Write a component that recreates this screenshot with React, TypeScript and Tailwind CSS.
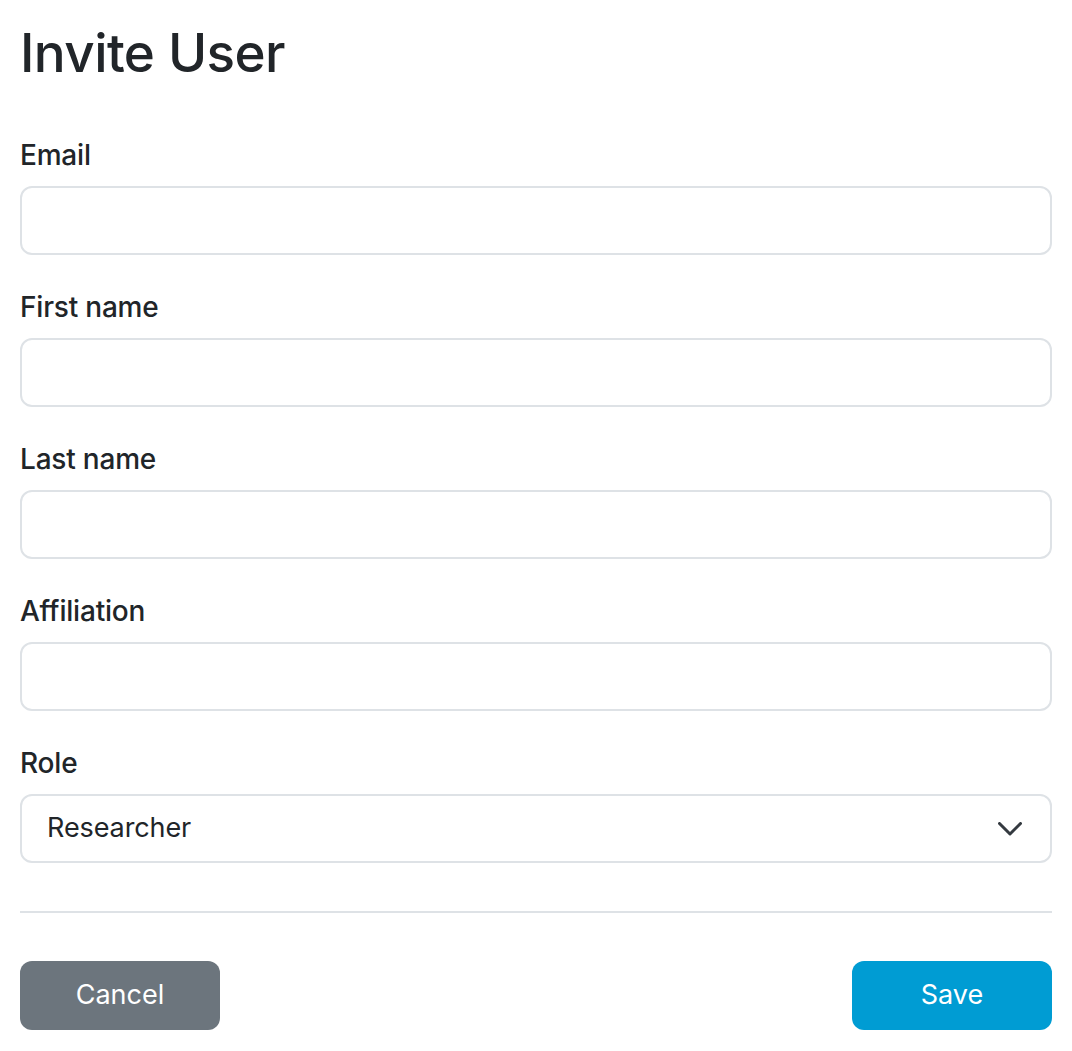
const fields = ["Email", "First name", "Last name", "Affiliation"];

function Label({ children }: { children: string }) {
  return (
    <label className="block text-[28px] leading-[45px] font-medium tracking-[-0.2px] text-[#212529] mb-2">
      {children}
    </label>
  );
}

export default function App() {
  return (
    <div className="min-h-screen bg-white px-5 pt-5 font-['Inter',sans-serif] text-[#212529]">
      <h3 className="text-[53px] leading-[67px] font-medium tracking-[-0.6px] mb-[46px]">
        Invite User
      </h3>

      <form onSubmit={(e) => e.preventDefault()}>
        {fields.map((f) => (
          <div key={f} className="mb-[30px]">
            <Label>{f}</Label>
            <input
              type="text"
              className="block w-full h-[69px] rounded-[12px] border-2 border-[#dee2e6] bg-white px-6 text-[27px] outline-none"
            />
          </div>
        ))}

        <div>
          <Label>Role</Label>
          <div className="relative">
            <select
              defaultValue="Researcher"
              className="block w-full h-[69px] appearance-none rounded-[12px] border-2 border-[#dee2e6] bg-white pl-[25px] pr-16 text-[27px] tracking-[-0.1px] text-[#212529] outline-none"
            >
              <option>Researcher</option>
              <option>Admin</option>
            </select>
            <svg
              className="pointer-events-none absolute right-[30px] top-1/2 -translate-y-1/2"
              width="24"
              height="14"
              viewBox="0 0 24 14"
              fill="none"
            >
              <polyline
                points="1.5,1.5 12,12 22.5,1.5"
                stroke="#343a40"
                strokeWidth="3"
                strokeLinecap="round"
                strokeLinejoin="round"
              />
            </svg>
          </div>
        </div>

        <hr className="mt-[48px] mb-[48px] border-t-2 border-[#dee2e6]" />

        <div className="flex justify-between">
          <button
            type="button"
            className="w-[200px] h-[69px] rounded-[12px] bg-[#6c757d] text-white text-[27px]"
          >
            Cancel
          </button>
          <button
            type="submit"
            className="w-[200px] h-[69px] rounded-[12px] bg-[#009cd3] text-white text-[27px]"
          >
            Save
          </button>
        </div>
      </form>
    </div>
  );
}
